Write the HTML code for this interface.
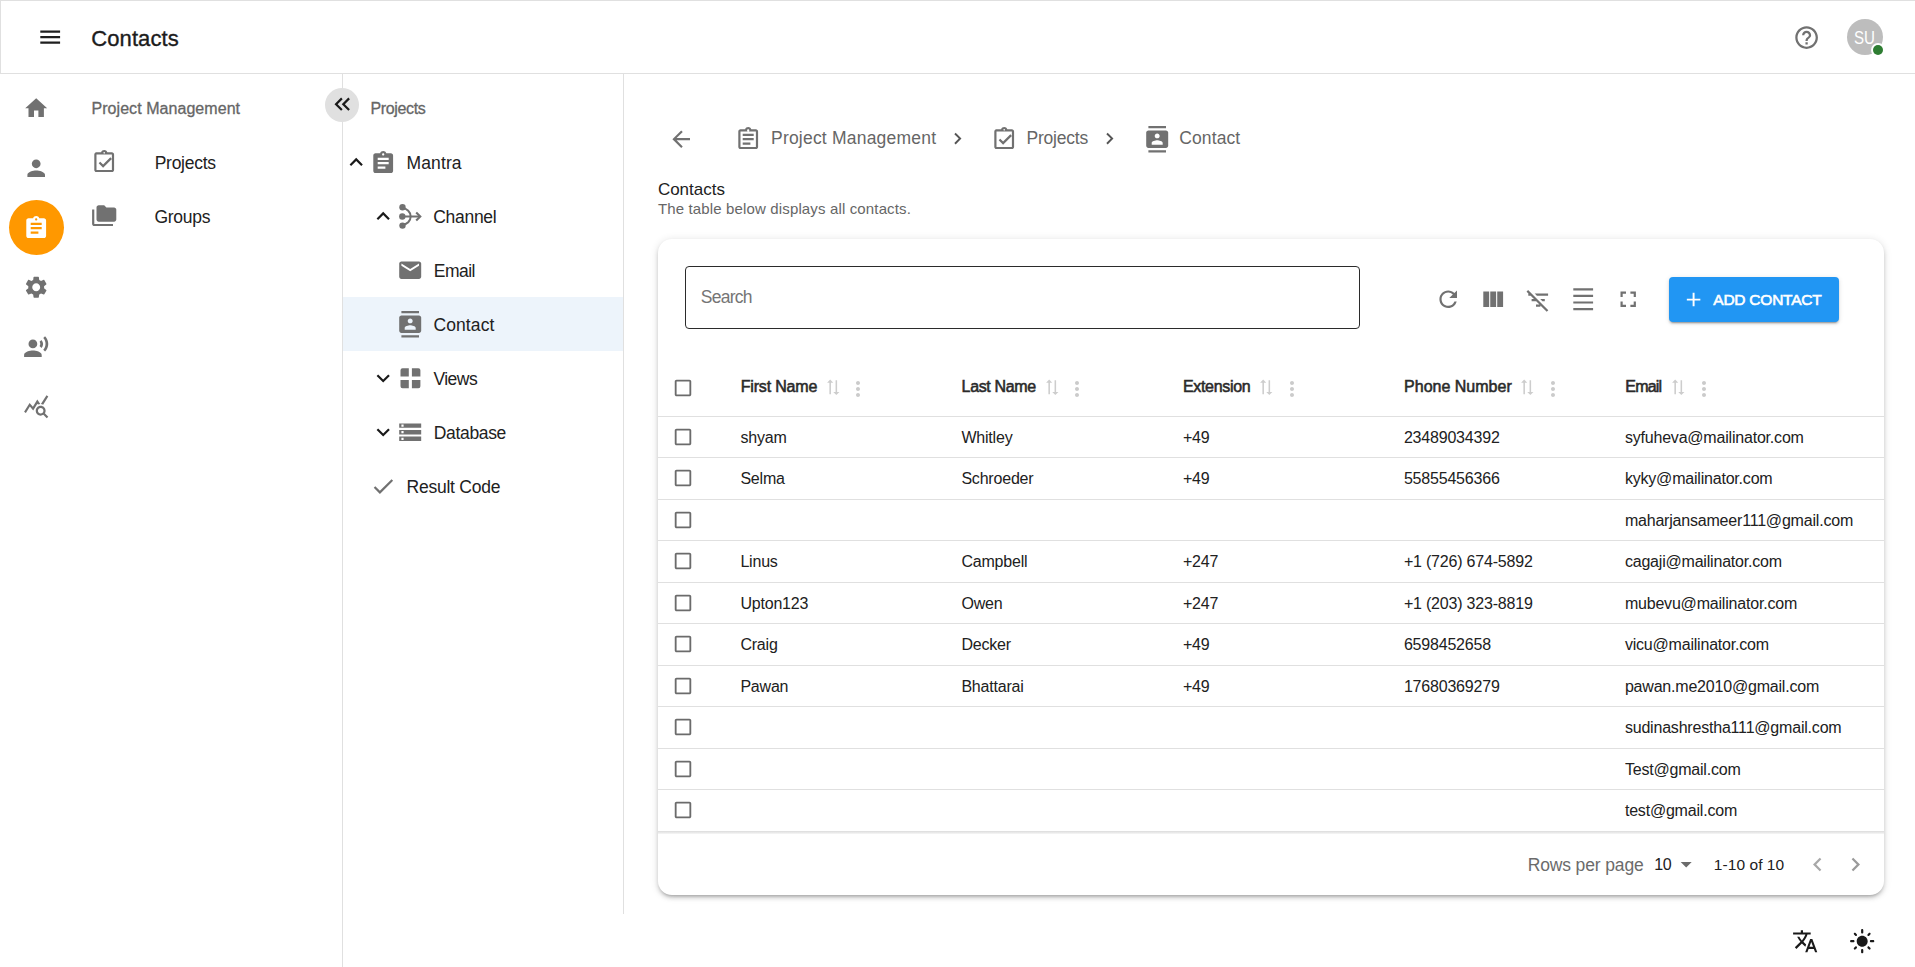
<!DOCTYPE html>
<html><head><meta charset="utf-8"><title>Contacts</title>
<style>
html,body{margin:0;padding:0;background:#fff;}
body{width:1915px;height:967px;position:relative;overflow:hidden;font-family:"Liberation Sans",sans-serif;}
.t{position:absolute;white-space:nowrap;line-height:1;}
.i{position:absolute;display:block;overflow:visible;}
.r{position:absolute;}
</style></head><body>
<div class="r" style="left:0px;top:0px;width:1915px;height:74px;box-sizing:border-box;border:1px solid #e0e0e0;border-right:none;background:#fff;"></div>
<svg class="i" style="left:37.20px;top:24.20px;width:26.4px;height:26.4px;" viewBox="0 0 24 24"><path fill="#1f1f1f" d="M3 18h18v-2H3zm0-5h18v-2H3zm0-7v2h18V6z"/></svg>
<div class="t" style="left:91.30px;top:28.00px;font-size:22px;color:#1c1c1c;letter-spacing:0.087px;-webkit-text-stroke:0.35px #1c1c1c;">Contacts</div>
<svg class="i" style="left:1793.10px;top:24.00px;width:27.2px;height:27.2px;" viewBox="0 0 24 24"><path fill="#717171" d="M11 18h2v-2h-2zm1-16C6.48 2 2 6.48 2 12s4.48 10 10 10 10-4.48 10-10S17.52 2 12 2m0 18c-4.41 0-8-3.59-8-8s3.59-8 8-8 8 3.59 8 8-3.59 8-8 8m0-14c-2.21 0-4 1.79-4 4h2c0-1.1.9-2 2-2s2 .9 2 2c0 2-3 1.75-3 5h2c0-2.25 3-2.5 3-5 0-2.21-1.79-4-4-4"/></svg>
<div class="r" style="left:1847px;top:19px;width:36px;height:36px;border-radius:50%;background:#bdbdbd;"></div>
<div class="t" style="left:1853.70px;top:29.00px;font-size:18px;color:#fff;transform:scaleX(0.8393);transform-origin:0.00px 0;">SU</div>
<div class="r" style="left:1870.9px;top:43px;width:14px;height:14px;border-radius:50%;background:#fff;"></div>
<div class="r" style="left:1872.9px;top:45px;width:10px;height:10px;border-radius:50%;background:#2e7d32;"></div>
<svg class="i" style="left:22.80px;top:95.35px;width:26.4px;height:26.4px;" viewBox="0 0 24 24"><path fill="#717171" d="M10 20v-6h4v6h5v-8h3L12 3 2 12h3v8z"/></svg>
<svg class="i" style="left:23.40px;top:155.10px;width:26.4px;height:26.4px;" viewBox="0 0 24 24"><path fill="#717171" d="M12 12c2.21 0 4-1.79 4-4s-1.79-4-4-4-4 1.79-4 4 1.79 4 4 4m0 2c-2.67 0-8 1.34-8 4v2h16v-2c0-2.66-5.33-4-8-4"/></svg>
<div class="r" style="left:9px;top:200px;width:55px;height:55px;border-radius:50%;background:#ff9800;"></div>
<svg class="i" style="left:23.30px;top:214.90px;width:26.4px;height:26.4px;" viewBox="0 0 24 24"><path fill="#fff" d="M19 3h-4.18C14.4 1.84 13.3 1 12 1s-2.4.84-2.82 2H5c-1.1 0-2 .9-2 2v14c0 1.1.9 2 2 2h14c1.1 0 2-.9 2-2V5c0-1.1-.9-2-2-2m-7 0c.55 0 1 .45 1 1s-.45 1-1 1-1-.45-1-1 .45-1 1-1m2 14H7v-2h7zm3-4H7v-2h10zm0-4H7V7h10z"/></svg>
<svg class="i" style="left:23.30px;top:274.20px;width:26.4px;height:26.4px;" viewBox="0 0 24 24"><path fill="#717171" d="M19.14 12.94c.04-.3.06-.61.06-.94 0-.32-.02-.64-.07-.94l2.03-1.58c.18-.14.23-.41.12-.61l-1.92-3.32c-.12-.22-.37-.29-.59-.22l-2.39.96c-.5-.38-1.03-.7-1.62-.94l-.36-2.54c-.04-.24-.24-.41-.48-.41h-3.84c-.24 0-.43.17-.47.41l-.36 2.54c-.59.24-1.13.57-1.62.94l-2.39-.96c-.22-.08-.47 0-.59.22L2.74 8.87c-.12.21-.08.47.12.61l2.03 1.58c-.05.3-.09.63-.09.94s.02.64.07.94l-2.03 1.58c-.18.14-.23.41-.12.61l1.92 3.32c.12.22.37.29.59.22l2.39-.96c.5.38 1.03.7 1.62.94l.36 2.54c.05.24.24.41.48.41h3.84c.24 0 .44-.17.47-.41l.36-2.54c.59-.24 1.13-.56 1.62-.94l2.39.96c.22.08.47 0 .59-.22l1.92-3.32c.12-.22.07-.47-.12-.61zM12 15.6c-1.98 0-3.6-1.62-3.6-3.6s1.62-3.6 3.6-3.6 3.6 1.62 3.6 3.6-1.62 3.6-3.6 3.6"/></svg>
<svg class="i" style="left:23.46px;top:334.25px;width:26.4px;height:26.4px;" viewBox="0 0 24 24"><path fill="#717171" d="M9 13c2.21 0 4-1.79 4-4s-1.79-4-4-4-4 1.79-4 4 1.79 4 4 4zm0 2c-2.67 0-8 1.34-8 4v2h16v-2c0-2.66-5.33-4-8-4zm6.08-7.95c.84 1.18.84 2.71 0 3.89l1.68 1.69c2.02-2.02 2.02-5.07 0-7.27l-1.68 1.69zM20.07 2l-1.63 1.63c2.77 3.02 2.77 7.56 0 10.74L20.07 16c3.9-3.89 3.91-9.95 0-14z"/></svg>
<svg class="i" style="left:23.40px;top:393.25px;width:26.4px;height:26.4px;" viewBox="0 0 24 24"><path fill="#717171" d="M19.88 18.47c.44-.7.7-1.51.7-2.39 0-2.49-2.01-4.5-4.5-4.5s-4.5 2.01-4.5 4.5 2.01 4.5 4.49 4.5c.88 0 1.7-.26 2.39-.7L21.58 23 23 21.58zm-3.8.11c-1.38 0-2.5-1.12-2.5-2.5s1.12-2.5 2.5-2.5 2.5 1.12 2.5 2.5-1.12 2.5-2.5 2.5m-.36-8.5c-.74.02-1.45.18-2.1.45l-.55-.83-3.8 6.18-3.01-3.52-3.63 5.81L1 17l5-8 3 3.5L13 6zm2.59.5c-.64-.28-1.33-.45-2.05-.49L21.38 2 23 3.18z"/></svg>
<div class="t" style="left:91.50px;top:101.00px;font-size:16px;color:#666;letter-spacing:0.053px;-webkit-text-stroke:0.3px #666;">Project Management</div>
<svg class="i" style="left:91.40px;top:149.40px;width:26.4px;height:26.4px;" viewBox="0 0 24 24"><path fill="#717171" d="M19 3h-4.18C14.4 1.84 13.3 1 12 1s-2.4.84-2.82 2H5c-.14 0-.27.01-.4.04-.39.08-.74.28-1.01.55-.18.18-.33.4-.43.64-.1.23-.16.49-.16.77v14c0 .27.06.54.16.78s.25.45.43.64c.27.27.62.47 1.01.55.13.02.26.03.4.03h14c1.1 0 2-.9 2-2V5c0-1.1-.9-2-2-2m-8 11.17-2.59-2.58L7 13l4 4 8-8-1.41-1.42zM12 2.75c.41 0 .75.34.75.75s-.34.75-.75.75-.75-.34-.75-.75.34-.75.75-.75M19 19H5V5h14z"/></svg>
<div class="t" style="left:154.70px;top:155.00px;font-size:17.5px;color:#212121;letter-spacing:-0.268px;">Projects</div>
<svg class="i" style="left:91.40px;top:203.35px;width:26.4px;height:26.4px;" viewBox="0 0 24 24"><path fill="#717171" d="M3 6H1v13c0 1.1.9 2 2 2h17v-2H3z M21 4h-7l-2-2H7c-1.1 0-1.99.9-1.99 2L5 15c0 1.1.9 2 2 2h14c1.1 0 2-.9 2-2V6c0-1.1-.9-2-2-2"/></svg>
<div class="t" style="left:154.40px;top:209.00px;font-size:17.5px;color:#212121;letter-spacing:-0.280px;">Groups</div>
<div class="r" style="left:342px;top:74px;width:1px;height:893px;background:#e0e0e0;"></div>
<div class="r" style="left:623px;top:74px;width:1px;height:840px;background:#e0e0e0;"></div>
<div class="r" style="left:325px;top:88px;width:34px;height:34px;border-radius:50%;background:#e0e0e0;"></div>
<svg class="i" style="left:329.40px;top:91.30px;width:26.4px;height:26.4px;" viewBox="0 0 24 24"><path fill="#1a1a1a" d="M17.59 18 19 16.59 14.42 12 19 7.41 17.59 6l-6 6z M11 18l1.41-1.41L7.83 12l4.58-4.59L11 6l-6 6z"/></svg>
<div class="t" style="left:370.40px;top:101.00px;font-size:16px;color:#666;letter-spacing:-0.337px;-webkit-text-stroke:0.3px #666;">Projects</div>
<div class="r" style="left:343px;top:297px;width:280px;height:54px;background:#edf4fb;"></div>
<svg class="i" style="left:343.20px;top:149.43px;width:26.4px;height:26.4px;" viewBox="0 0 24 24"><path fill="#1a1a1a" d="m12 8-6 6 1.41 1.41L12 10.83l4.59 4.58L18 14z"/></svg>
<svg class="i" style="left:370.30px;top:149.60px;width:26.4px;height:26.4px;" viewBox="0 0 24 24"><path fill="#717171" d="M19 3h-4.18C14.4 1.84 13.3 1 12 1s-2.4.84-2.82 2H5c-1.1 0-2 .9-2 2v14c0 1.1.9 2 2 2h14c1.1 0 2-.9 2-2V5c0-1.1-.9-2-2-2m-7 0c.55 0 1 .45 1 1s-.45 1-1 1-1-.45-1-1 .45-1 1-1m2 14H7v-2h7zm3-4H7v-2h10zm0-4H7V7h10z"/></svg>
<div class="t" style="left:406.60px;top:155.00px;font-size:17.5px;color:#212121;letter-spacing:0.097px;">Mantra</div>
<svg class="i" style="left:370.20px;top:203.33px;width:26.4px;height:26.4px;" viewBox="0 0 24 24"><path fill="#1a1a1a" d="m12 8-6 6 1.41 1.41L12 10.83l4.59 4.58L18 14z"/></svg>
<div class="t" style="left:433.20px;top:209.00px;font-size:17.5px;color:#212121;letter-spacing:-0.281px;">Channel</div>
<svg class="i" style="left:397.30px;top:257.30px;width:26.4px;height:26.4px;" viewBox="0 0 24 24"><path fill="#717171" d="M20 4H4c-1.1 0-1.99.9-1.99 2L2 18c0 1.1.9 2 2 2h16c1.1 0 2-.9 2-2V6c0-1.1-.9-2-2-2m0 4-8 5-8-5V6l8 5 8-5z"/></svg>
<div class="t" style="left:433.80px;top:263.00px;font-size:17.5px;color:#212121;letter-spacing:-0.537px;">Email</div>
<svg class="i" style="left:397.40px;top:311.20px;width:26.4px;height:26.4px;" viewBox="0 0 24 24"><path fill="#717171" d="M20 0H4v2h16zM4 24h16v-2H4zM20 4H4c-1.1 0-2 .9-2 2v12c0 1.1.9 2 2 2h16c1.1 0 2-.9 2-2V6c0-1.1-.9-2-2-2m-8 2.75c1.24 0 2.25 1.01 2.25 2.25s-1.01 2.25-2.25 2.25S9.75 10.24 9.75 9 10.76 6.75 12 6.75M17 17H7v-1.5c0-1.67 3.33-2.5 5-2.5s5 .83 5 2.5z"/></svg>
<div class="t" style="left:433.40px;top:317.00px;font-size:17.5px;color:#212121;letter-spacing:0.119px;">Contact</div>
<svg class="i" style="left:370.20px;top:365.17px;width:26.4px;height:26.4px;" viewBox="0 0 24 24"><path fill="#1a1a1a" d="M16.59 8.59 12 13.17 7.41 8.59 6 10l6 6 6-6z"/></svg>
<div class="t" style="left:433.40px;top:371.00px;font-size:17.5px;color:#212121;letter-spacing:-0.519px;">Views</div>
<svg class="i" style="left:370.20px;top:419.17px;width:26.4px;height:26.4px;" viewBox="0 0 24 24"><path fill="#1a1a1a" d="M16.59 8.59 12 13.17 7.41 8.59 6 10l6 6 6-6z"/></svg>
<svg class="i" style="left:397.20px;top:419.30px;width:26.4px;height:26.4px;" viewBox="0 0 24 24"><path fill="#717171" d="M2 20h20v-4H2zm2-3h2v2H4zM2 4v4h20V4zm4 3H4V5h2zm-4 7h20v-4H2zm2-3h2v2H4z"/></svg>
<div class="t" style="left:433.80px;top:425.00px;font-size:17.5px;color:#212121;letter-spacing:-0.343px;">Database</div>
<svg class="i" style="left:370.18px;top:473.37px;width:26.4px;height:26.4px;" viewBox="0 0 24 24"><path fill="#717171" d="M9 16.17 4.83 12l-1.42 1.41L9 19 21 7l-1.41-1.41z"/></svg>
<div class="t" style="left:406.50px;top:479.00px;font-size:17.5px;color:#212121;letter-spacing:-0.234px;">Result Code</div>
<svg class="i" style="left:396px;top:201px;width:30px;height:30px" viewBox="0 0 30 30"><g fill="#717171"><circle cx="6.5" cy="6.2" r="3.2"/><circle cx="6.3" cy="15.5" r="3.2"/><circle cx="6.5" cy="24.6" r="3.2"/></g><g fill="none" stroke="#717171" stroke-width="2"><path d="M6.5 7.3A8.15 8.15 0 0 1 6.5 23.6"/><path d="M7 15.5H24"/><path d="M20.2 11.4L24.3 15.5 20.2 19.6" stroke-width="2.1"/></g></svg>
<svg class="i" style="left:396px;top:364px;width:30px;height:30px" viewBox="0 0 30 30"><path fill="#717171" d="M12.8 4.3V12.6H4.5V6.3a2 2 0 0 1 2-2zM15.9 4.3H22.4a2 2 0 0 1 2 2V12.6H15.9zM4.5 15.9H12.8V24.3H6.5a2 2 0 0 1-2-2zM15.9 15.9H24.4V22.3a2 2 0 0 1-2 2H15.9z"/></svg>
<svg class="i" style="left:667.50px;top:126.00px;width:26.4px;height:26.4px;" viewBox="0 0 24 24"><path fill="#717171" d="M20 11H7.83l5.59-5.59L12 4l-8 8 8 8 1.41-1.41L7.83 13H20z"/></svg>
<svg class="i" style="left:735.20px;top:126.20px;width:26.4px;height:26.4px;" viewBox="0 0 24 24"><path fill="#717171" d="M19 3h-4.18C14.4 1.84 13.3 1 12 1s-2.4.84-2.82 2H5c-1.1 0-2 .9-2 2v14c0 1.1.9 2 2 2h14c1.1 0 2-.9 2-2V5c0-1.1-.9-2-2-2m-7 0c.55 0 1 .45 1 1s-.45 1-1 1-1-.45-1-1 .45-1 1-1m7 16H5V5h14zM7 15h7v2H7zm0-4h10v2H7zm0-4h10v2H7z"/></svg>
<div class="t" style="left:771.00px;top:130.00px;font-size:17.5px;color:#666;letter-spacing:0.210px;">Project Management</div>
<svg class="i" style="left:945.68px;top:127.38px;width:23.232px;height:23.232px;" viewBox="0 0 24 24"><path fill="#555" d="M10 6 8.59 7.41 13.17 12l-4.58 4.59L10 18l6-6z"/></svg>
<svg class="i" style="left:991.20px;top:126.30px;width:26.4px;height:26.4px;" viewBox="0 0 24 24"><path fill="#717171" d="M19 3h-4.18C14.4 1.84 13.3 1 12 1s-2.4.84-2.82 2H5c-.14 0-.27.01-.4.04-.39.08-.74.28-1.01.55-.18.18-.33.4-.43.64-.1.23-.16.49-.16.77v14c0 .27.06.54.16.78s.25.45.43.64c.27.27.62.47 1.01.55.13.02.26.03.4.03h14c1.1 0 2-.9 2-2V5c0-1.1-.9-2-2-2m-8 11.17-2.59-2.58L7 13l4 4 8-8-1.41-1.42zM12 2.75c.41 0 .75.34.75.75s-.34.75-.75.75-.75-.34-.75-.75.34-.75.75-.75M19 19H5V5h14z"/></svg>
<div class="t" style="left:1026.60px;top:130.00px;font-size:17.5px;color:#666;letter-spacing:-0.239px;">Projects</div>
<svg class="i" style="left:1097.78px;top:127.38px;width:23.232px;height:23.232px;" viewBox="0 0 24 24"><path fill="#555" d="M10 6 8.59 7.41 13.17 12l-4.58 4.59L10 18l6-6z"/></svg>
<svg class="i" style="left:1143.50px;top:126.30px;width:26.4px;height:26.4px;" viewBox="0 0 24 24"><path fill="#717171" d="M20 0H4v2h16zM4 24h16v-2H4zM20 4H4c-1.1 0-2 .9-2 2v12c0 1.1.9 2 2 2h16c1.1 0 2-.9 2-2V6c0-1.1-.9-2-2-2m-8 2.75c1.24 0 2.25 1.01 2.25 2.25s-1.01 2.25-2.25 2.25S9.75 10.24 9.75 9 10.76 6.75 12 6.75M17 17H7v-1.5c0-1.67 3.33-2.5 5-2.5s5 .83 5 2.5z"/></svg>
<div class="t" style="left:1179.20px;top:130.00px;font-size:17.5px;color:#666;letter-spacing:0.119px;">Contact</div>
<div class="t" style="left:657.90px;top:181.00px;font-size:17px;color:#212121;">Contacts</div>
<div class="t" style="left:657.90px;top:201.00px;font-size:15px;color:#666;letter-spacing:0.145px;">The table below displays all contacts.</div>
<div class="r" style="left:658px;top:239px;width:1226px;height:656px;border-radius:14px;background:#fff;box-shadow:0px 3px 3px -2px rgba(0,0,0,0.2),0px 3px 4px 0px rgba(0,0,0,0.14),0px 1px 8px 0px rgba(0,0,0,0.12);"></div>
<div class="r" style="left:685px;top:266px;width:675px;height:63px;box-sizing:border-box;border:1px solid #2b2b2b;border-radius:4px;"></div>
<div class="t" style="left:700.80px;top:289.00px;font-size:17.5px;color:#757575;letter-spacing:-0.755px;">Search</div>
<svg class="i" style="left:1435.40px;top:286.00px;width:26.4px;height:26.4px;" viewBox="0 0 24 24"><path fill="#717171" d="M17.65 6.35C16.2 4.9 14.21 4 12 4c-4.42 0-7.99 3.58-7.99 8s3.57 8 7.99 8c3.73 0 6.84-2.55 7.73-6h-2.08c-.82 2.33-3.04 4-5.65 4-3.31 0-6-2.69-6-6s2.69-6 6-6c1.66 0 3.14.69 4.22 1.78L13 11h7V4z"/></svg>
<svg class="i" style="left:1480.20px;top:286.20px;width:26.4px;height:26.4px;" viewBox="0 0 24 24"><path fill="#717171" d="M14.67 5v14H9.33V5zm1 14H21V5h-5.33zm-7.34 0V5H3v14z"/></svg>
<svg class="i" style="left:1524.60px;top:286.80px;width:26.4px;height:26.4px;" viewBox="0 0 24 24"><path fill="#717171" d="M10.83 8H21V6H8.83zm5 5H18v-2h-4.17zM14 16.83V18h-4v-2h3.17l-3-3H6v-2h2.17l-3-3H3V6h.17L1.39 4.22 2.8 2.81l18.38 18.38-1.41 1.41z"/></svg>
<svg class="i" style="left:1570.20px;top:286.30px;width:26.4px;height:26.4px;" viewBox="0 0 24 24"><path fill="#717171" d="M3 2h18v2H3zm0 18h18v2H3zm0-6h18v2H3zm0-6h18v2H3z"/></svg>
<svg class="i" style="left:1615.20px;top:286.20px;width:26.4px;height:26.4px;" viewBox="0 0 24 24"><path fill="#717171" d="M7 14H5v5h5v-2H7zm-2-4h2V7h3V5H5zm12 7h-3v2h5v-5h-2zM14 5v2h3v3h2V5z"/></svg>
<div class="r" style="left:1669px;top:277px;width:170px;height:45px;border-radius:4px;background:#2196f3;box-shadow:0px 3px 1px -2px rgba(0,0,0,0.2),0px 2px 2px 0px rgba(0,0,0,0.14),0px 1px 5px 0px rgba(0,0,0,0.12);"></div>
<svg class="i" style="left:1681.60px;top:287.80px;width:23.2px;height:23.2px;" viewBox="0 0 24 24"><path fill="#fff" d="M19 13h-6v6h-2v-6H5v-2h6V5h2v6h6z"/></svg>
<div class="t" style="left:1713.30px;top:292.00px;font-size:15.5px;color:#fff;letter-spacing:-0.242px;-webkit-text-stroke:0.6px #fff;">ADD CONTACT</div>
<svg class="i" style="left:672.00px;top:377.00px;width:22px;height:22px;" viewBox="0 0 24 24"><path fill="#6b6b6b" d="M19 5v14H5V5zm0-2H5c-1.1 0-2 .9-2 2v14c0 1.1.9 2 2 2h14c1.1 0 2-.9 2-2V5c0-1.1-.9-2-2-2"/></svg>
<div class="t" style="left:740.70px;top:379.00px;font-size:16px;color:#2a2a2a;letter-spacing:-0.171px;-webkit-text-stroke:0.55px #2a2a2a;">First Name</div>
<svg class="i" style="left:823.75px;top:377.95px;width:18.5px;height:18.5px;transform:rotate(90deg)" viewBox="0 0 24 24"><path fill="#cdcdcd" d="m18 12 4-4-4-4v3H3v2h15zM6 12l-4 4 4 4v-3h15v-2H6z"/></svg>
<svg class="i" style="left:845.90px;top:376.80px;width:24px;height:24px;" viewBox="0 0 24 24"><path fill="#cbcbcb" d="M12 8c1.1 0 2-.9 2-2s-.9-2-2-2-2 .9-2 2 .9 2 2 2m0 2c-1.1 0-2 .9-2 2s.9 2 2 2 2-.9 2-2-.9-2-2-2m0 6c-1.1 0-2 .9-2 2s.9 2 2 2 2-.9 2-2-.9-2-2-2"/></svg>
<div class="t" style="left:961.60px;top:379.00px;font-size:16px;color:#2a2a2a;letter-spacing:-0.345px;-webkit-text-stroke:0.55px #2a2a2a;">Last Name</div>
<svg class="i" style="left:1042.55px;top:377.95px;width:18.5px;height:18.5px;transform:rotate(90deg)" viewBox="0 0 24 24"><path fill="#cdcdcd" d="m18 12 4-4-4-4v3H3v2h15zM6 12l-4 4 4 4v-3h15v-2H6z"/></svg>
<svg class="i" style="left:1065.10px;top:376.80px;width:24px;height:24px;" viewBox="0 0 24 24"><path fill="#cbcbcb" d="M12 8c1.1 0 2-.9 2-2s-.9-2-2-2-2 .9-2 2 .9 2 2 2m0 2c-1.1 0-2 .9-2 2s.9 2 2 2 2-.9 2-2-.9-2-2-2m0 6c-1.1 0-2 .9-2 2s.9 2 2 2 2-.9 2-2-.9-2-2-2"/></svg>
<div class="t" style="left:1182.90px;top:379.00px;font-size:16px;color:#2a2a2a;letter-spacing:-0.305px;-webkit-text-stroke:0.55px #2a2a2a;">Extension</div>
<svg class="i" style="left:1256.85px;top:377.95px;width:18.5px;height:18.5px;transform:rotate(90deg)" viewBox="0 0 24 24"><path fill="#cdcdcd" d="m18 12 4-4-4-4v3H3v2h15zM6 12l-4 4 4 4v-3h15v-2H6z"/></svg>
<svg class="i" style="left:1280.00px;top:376.80px;width:24px;height:24px;" viewBox="0 0 24 24"><path fill="#cbcbcb" d="M12 8c1.1 0 2-.9 2-2s-.9-2-2-2-2 .9-2 2 .9 2 2 2m0 2c-1.1 0-2 .9-2 2s.9 2 2 2 2-.9 2-2-.9-2-2-2m0 6c-1.1 0-2 .9-2 2s.9 2 2 2 2-.9 2-2-.9-2-2-2"/></svg>
<div class="t" style="left:1404.10px;top:379.00px;font-size:16px;color:#2a2a2a;-webkit-text-stroke:0.55px #2a2a2a;">Phone Number</div>
<svg class="i" style="left:1518.25px;top:377.95px;width:18.5px;height:18.5px;transform:rotate(90deg)" viewBox="0 0 24 24"><path fill="#cdcdcd" d="m18 12 4-4-4-4v3H3v2h15zM6 12l-4 4 4 4v-3h15v-2H6z"/></svg>
<svg class="i" style="left:1541.10px;top:376.80px;width:24px;height:24px;" viewBox="0 0 24 24"><path fill="#cbcbcb" d="M12 8c1.1 0 2-.9 2-2s-.9-2-2-2-2 .9-2 2 .9 2 2 2m0 2c-1.1 0-2 .9-2 2s.9 2 2 2 2-.9 2-2-.9-2-2-2m0 6c-1.1 0-2 .9-2 2s.9 2 2 2 2-.9 2-2-.9-2-2-2"/></svg>
<div class="t" style="left:1625.30px;top:379.00px;font-size:16px;color:#2a2a2a;letter-spacing:-0.825px;-webkit-text-stroke:0.55px #2a2a2a;">Email</div>
<svg class="i" style="left:1669.05px;top:377.95px;width:18.5px;height:18.5px;transform:rotate(90deg)" viewBox="0 0 24 24"><path fill="#cdcdcd" d="m18 12 4-4-4-4v3H3v2h15zM6 12l-4 4 4 4v-3h15v-2H6z"/></svg>
<svg class="i" style="left:1691.90px;top:376.80px;width:24px;height:24px;" viewBox="0 0 24 24"><path fill="#cbcbcb" d="M12 8c1.1 0 2-.9 2-2s-.9-2-2-2-2 .9-2 2 .9 2 2 2m0 2c-1.1 0-2 .9-2 2s.9 2 2 2 2-.9 2-2-.9-2-2-2m0 6c-1.1 0-2 .9-2 2s.9 2 2 2 2-.9 2-2-.9-2-2-2"/></svg>
<div class="r" style="left:658px;top:416px;width:1226px;height:1px;background:#e0e0e0;"></div>
<div class="r" style="left:658px;top:457px;width:1226px;height:1px;background:#e0e0e0;"></div>
<svg class="i" style="left:672.00px;top:425.60px;width:22px;height:22px;" viewBox="0 0 24 24"><path fill="#6b6b6b" d="M19 5v14H5V5zm0-2H5c-1.1 0-2 .9-2 2v14c0 1.1.9 2 2 2h14c1.1 0 2-.9 2-2V5c0-1.1-.9-2-2-2"/></svg>
<div class="t" style="left:740.40px;top:430.00px;font-size:16px;color:#212121;letter-spacing:-0.2px;">shyam</div>
<div class="t" style="left:961.40px;top:430.00px;font-size:16px;color:#212121;letter-spacing:-0.2px;">Whitley</div>
<div class="t" style="left:1182.90px;top:430.00px;font-size:16px;color:#212121;letter-spacing:-0.2px;">+49</div>
<div class="t" style="left:1403.90px;top:430.00px;font-size:16px;color:#212121;letter-spacing:-0.2px;">23489034392</div>
<div class="t" style="left:1624.90px;top:430.00px;font-size:16px;color:#212121;letter-spacing:-0.2px;">syfuheva@mailinator.com</div>
<div class="r" style="left:658px;top:499px;width:1226px;height:1px;background:#e0e0e0;"></div>
<svg class="i" style="left:672.00px;top:467.10px;width:22px;height:22px;" viewBox="0 0 24 24"><path fill="#6b6b6b" d="M19 5v14H5V5zm0-2H5c-1.1 0-2 .9-2 2v14c0 1.1.9 2 2 2h14c1.1 0 2-.9 2-2V5c0-1.1-.9-2-2-2"/></svg>
<div class="t" style="left:740.40px;top:471.00px;font-size:16px;color:#212121;letter-spacing:-0.2px;">Selma</div>
<div class="t" style="left:961.40px;top:471.00px;font-size:16px;color:#212121;letter-spacing:-0.2px;">Schroeder</div>
<div class="t" style="left:1182.90px;top:471.00px;font-size:16px;color:#212121;letter-spacing:-0.2px;">+49</div>
<div class="t" style="left:1403.90px;top:471.00px;font-size:16px;color:#212121;letter-spacing:-0.2px;">55855456366</div>
<div class="t" style="left:1624.90px;top:471.00px;font-size:16px;color:#212121;letter-spacing:-0.2px;">kyky@mailinator.com</div>
<div class="r" style="left:658px;top:540px;width:1226px;height:1px;background:#e0e0e0;"></div>
<svg class="i" style="left:672.00px;top:508.60px;width:22px;height:22px;" viewBox="0 0 24 24"><path fill="#6b6b6b" d="M19 5v14H5V5zm0-2H5c-1.1 0-2 .9-2 2v14c0 1.1.9 2 2 2h14c1.1 0 2-.9 2-2V5c0-1.1-.9-2-2-2"/></svg>
<div class="t" style="left:1624.90px;top:513.00px;font-size:16px;color:#212121;letter-spacing:-0.2px;">maharjansameer111@gmail.com</div>
<div class="r" style="left:658px;top:582px;width:1226px;height:1px;background:#e0e0e0;"></div>
<svg class="i" style="left:672.00px;top:550.10px;width:22px;height:22px;" viewBox="0 0 24 24"><path fill="#6b6b6b" d="M19 5v14H5V5zm0-2H5c-1.1 0-2 .9-2 2v14c0 1.1.9 2 2 2h14c1.1 0 2-.9 2-2V5c0-1.1-.9-2-2-2"/></svg>
<div class="t" style="left:740.40px;top:554.00px;font-size:16px;color:#212121;letter-spacing:-0.2px;">Linus</div>
<div class="t" style="left:961.40px;top:554.00px;font-size:16px;color:#212121;letter-spacing:-0.2px;">Campbell</div>
<div class="t" style="left:1182.90px;top:554.00px;font-size:16px;color:#212121;letter-spacing:-0.2px;">+247</div>
<div class="t" style="left:1403.90px;top:554.00px;font-size:16px;color:#212121;letter-spacing:-0.2px;">+1 (726) 674-5892</div>
<div class="t" style="left:1624.90px;top:554.00px;font-size:16px;color:#212121;letter-spacing:-0.2px;">cagaji@mailinator.com</div>
<div class="r" style="left:658px;top:623px;width:1226px;height:1px;background:#e0e0e0;"></div>
<svg class="i" style="left:672.00px;top:591.60px;width:22px;height:22px;" viewBox="0 0 24 24"><path fill="#6b6b6b" d="M19 5v14H5V5zm0-2H5c-1.1 0-2 .9-2 2v14c0 1.1.9 2 2 2h14c1.1 0 2-.9 2-2V5c0-1.1-.9-2-2-2"/></svg>
<div class="t" style="left:740.40px;top:596.00px;font-size:16px;color:#212121;letter-spacing:-0.2px;">Upton123</div>
<div class="t" style="left:961.40px;top:596.00px;font-size:16px;color:#212121;letter-spacing:-0.2px;">Owen</div>
<div class="t" style="left:1182.90px;top:596.00px;font-size:16px;color:#212121;letter-spacing:-0.2px;">+247</div>
<div class="t" style="left:1403.90px;top:596.00px;font-size:16px;color:#212121;letter-spacing:-0.2px;">+1 (203) 323-8819</div>
<div class="t" style="left:1624.90px;top:596.00px;font-size:16px;color:#212121;letter-spacing:-0.2px;">mubevu@mailinator.com</div>
<div class="r" style="left:658px;top:665px;width:1226px;height:1px;background:#e0e0e0;"></div>
<svg class="i" style="left:672.00px;top:633.10px;width:22px;height:22px;" viewBox="0 0 24 24"><path fill="#6b6b6b" d="M19 5v14H5V5zm0-2H5c-1.1 0-2 .9-2 2v14c0 1.1.9 2 2 2h14c1.1 0 2-.9 2-2V5c0-1.1-.9-2-2-2"/></svg>
<div class="t" style="left:740.40px;top:637.00px;font-size:16px;color:#212121;letter-spacing:-0.2px;">Craig</div>
<div class="t" style="left:961.40px;top:637.00px;font-size:16px;color:#212121;letter-spacing:-0.2px;">Decker</div>
<div class="t" style="left:1182.90px;top:637.00px;font-size:16px;color:#212121;letter-spacing:-0.2px;">+49</div>
<div class="t" style="left:1403.90px;top:637.00px;font-size:16px;color:#212121;letter-spacing:-0.2px;">6598452658</div>
<div class="t" style="left:1624.90px;top:637.00px;font-size:16px;color:#212121;letter-spacing:-0.2px;">vicu@mailinator.com</div>
<div class="r" style="left:658px;top:706px;width:1226px;height:1px;background:#e0e0e0;"></div>
<svg class="i" style="left:672.00px;top:674.60px;width:22px;height:22px;" viewBox="0 0 24 24"><path fill="#6b6b6b" d="M19 5v14H5V5zm0-2H5c-1.1 0-2 .9-2 2v14c0 1.1.9 2 2 2h14c1.1 0 2-.9 2-2V5c0-1.1-.9-2-2-2"/></svg>
<div class="t" style="left:740.40px;top:679.00px;font-size:16px;color:#212121;letter-spacing:-0.2px;">Pawan</div>
<div class="t" style="left:961.40px;top:679.00px;font-size:16px;color:#212121;letter-spacing:-0.2px;">Bhattarai</div>
<div class="t" style="left:1182.90px;top:679.00px;font-size:16px;color:#212121;letter-spacing:-0.2px;">+49</div>
<div class="t" style="left:1403.90px;top:679.00px;font-size:16px;color:#212121;letter-spacing:-0.2px;">17680369279</div>
<div class="t" style="left:1624.90px;top:679.00px;font-size:16px;color:#212121;letter-spacing:-0.2px;">pawan.me2010@gmail.com</div>
<div class="r" style="left:658px;top:748px;width:1226px;height:1px;background:#e0e0e0;"></div>
<svg class="i" style="left:672.00px;top:716.10px;width:22px;height:22px;" viewBox="0 0 24 24"><path fill="#6b6b6b" d="M19 5v14H5V5zm0-2H5c-1.1 0-2 .9-2 2v14c0 1.1.9 2 2 2h14c1.1 0 2-.9 2-2V5c0-1.1-.9-2-2-2"/></svg>
<div class="t" style="left:1624.90px;top:720.00px;font-size:16px;color:#212121;letter-spacing:-0.2px;">sudinashrestha111@gmail.com</div>
<div class="r" style="left:658px;top:789px;width:1226px;height:1px;background:#e0e0e0;"></div>
<svg class="i" style="left:672.00px;top:757.60px;width:22px;height:22px;" viewBox="0 0 24 24"><path fill="#6b6b6b" d="M19 5v14H5V5zm0-2H5c-1.1 0-2 .9-2 2v14c0 1.1.9 2 2 2h14c1.1 0 2-.9 2-2V5c0-1.1-.9-2-2-2"/></svg>
<div class="t" style="left:1624.90px;top:762.00px;font-size:16px;color:#212121;letter-spacing:-0.2px;">Test@gmail.com</div>
<div class="r" style="left:658px;top:831px;width:1226px;height:1px;background:#e0e0e0;"></div>
<svg class="i" style="left:672.00px;top:799.10px;width:22px;height:22px;" viewBox="0 0 24 24"><path fill="#6b6b6b" d="M19 5v14H5V5zm0-2H5c-1.1 0-2 .9-2 2v14c0 1.1.9 2 2 2h14c1.1 0 2-.9 2-2V5c0-1.1-.9-2-2-2"/></svg>
<div class="t" style="left:1624.90px;top:803.00px;font-size:16px;color:#212121;letter-spacing:-0.2px;">test@gmail.com</div>
<div class="r" style="left:658px;top:832px;width:1226px;height:2px;background:linear-gradient(#e4e4e4,#f7f7f7);"></div>
<div class="t" style="left:1527.70px;top:857.00px;font-size:17.5px;color:#6b6b6b;letter-spacing:-0.141px;">Rows per page</div>
<div class="t" style="left:1654.20px;top:857.00px;font-size:16px;color:#212121;letter-spacing:-0.260px;">10</div>
<svg class="i" style="left:1673.30px;top:850.85px;width:26.4px;height:26.4px;" viewBox="0 0 24 24"><path fill="#6b6b6b" d="M7 10l5 5 5-5z"/></svg>
<div class="t" style="left:1713.80px;top:857.00px;font-size:15.5px;color:#212121;letter-spacing:0.064px;">1-10 of 10</div>
<svg class="i" style="left:1803.70px;top:851.20px;width:27px;height:27px;" viewBox="0 0 24 24"><path fill="#a8a8a8" d="M15.41 7.41 14 6l-6 6 6 6 1.41-1.41L10.83 12z"/></svg>
<svg class="i" style="left:1842.30px;top:851.40px;width:27px;height:27px;" viewBox="0 0 24 24"><path fill="#9a9a9a" d="M10 6 8.59 7.41 13.17 12l-4.58 4.59L10 18l6-6z"/></svg>
<svg class="i" style="left:1792.20px;top:928.10px;width:26.4px;height:26.4px;" viewBox="0 0 24 24"><path fill="#1a1a1a" d="m12.87 15.07-2.54-2.51.03-.03c1.74-1.94 2.98-4.17 3.71-6.53H17V4h-7V2H8v2H1v1.99h11.17C11.5 7.92 10.44 9.75 9 11.35 8.07 10.32 7.3 9.19 6.69 8h-2c.73 1.63 1.73 3.17 2.98 4.56l-5.09 5.02L4 19l5-5 3.11 3.11zM18.5 10h-2L12 22h2l1.12-3h4.75L21 22h2zm-2.62 7 1.62-4.33L19.12 17z"/></svg>
<svg class="i" style="left:1848.50px;top:928.20px;width:26.4px;height:26.4px;" viewBox="0 0 24 24"><path fill="#1a1a1a" d="M12 7c-2.76 0-5 2.24-5 5s2.24 5 5 5 5-2.24 5-5-2.24-5-5-5M2 13h2c.55 0 1-.45 1-1s-.45-1-1-1H2c-.55 0-1 .45-1 1s.45 1 1 1m18 0h2c.55 0 1-.45 1-1s-.45-1-1-1h-2c-.55 0-1 .45-1 1s.45 1 1 1M11 2v2c0 .55.45 1 1 1s1-.45 1-1V2c0-.55-.45-1-1-1s-1 .45-1 1m0 18v2c0 .55.45 1 1 1s1-.45 1-1v-2c0-.55-.45-1-1-1s-1 .45-1 1M5.99 4.58c-.39-.39-1.03-.39-1.41 0-.39.39-.39 1.03 0 1.41l1.06 1.06c.39.39 1.03.39 1.41 0s.39-1.03 0-1.41zm12.37 12.37c-.39-.39-1.03-.39-1.41 0-.39.39-.39 1.03 0 1.41l1.06 1.06c.39.39 1.03.39 1.41 0 .39-.39.39-1.03 0-1.41zm1.06-10.96c.39-.39.39-1.03 0-1.41-.39-.39-1.03-.39-1.41 0l-1.06 1.06c-.39.39-.39 1.03 0 1.41s1.03.39 1.41 0zM7.05 18.36c.39-.39.39-1.03 0-1.41-.39-.39-1.03-.39-1.41 0l-1.06 1.06c-.39.39-.39 1.03 0 1.41s1.03.39 1.41 0z"/></svg>
</body></html>
